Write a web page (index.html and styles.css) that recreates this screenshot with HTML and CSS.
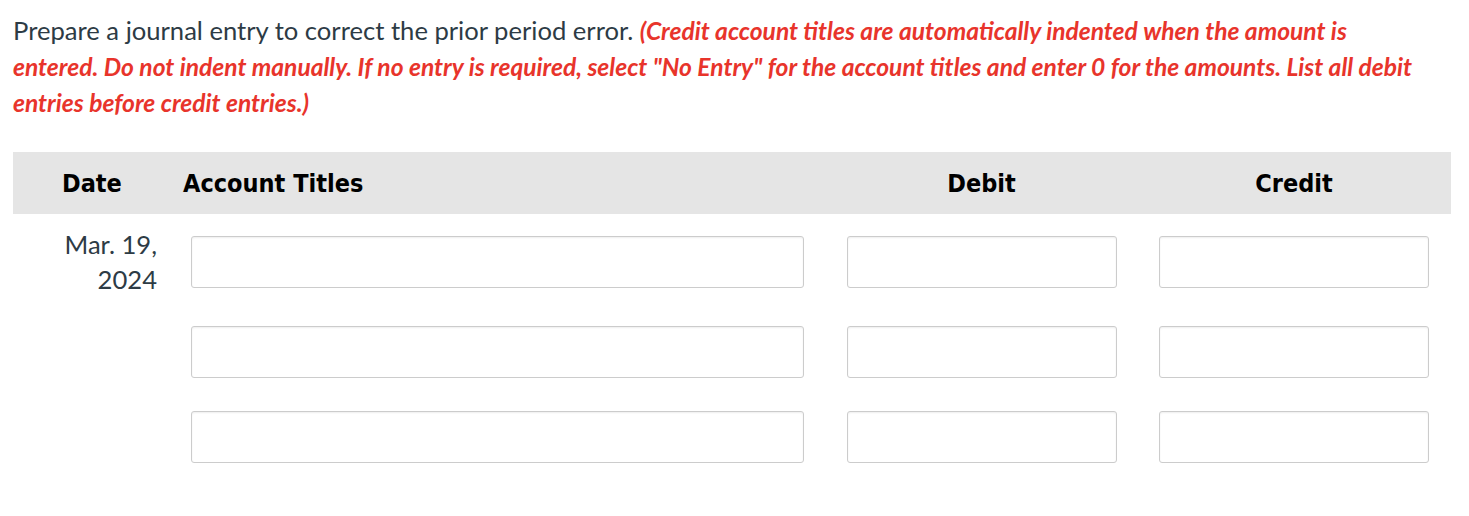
FILE: index.html
```html
<!DOCTYPE html>
<html lang="en">
<head>
<meta charset="utf-8">
<title>Journal entry</title>
<link rel="stylesheet" href="styles.css">
</head>
<body>
<div class="page">
  <p class="prompt">Prepare a journal entry to correct the prior period error. <em class="hint">(Credit account titles are automatically indented when the amount is entered. Do not indent manually. If no entry is required, select "No Entry" for the account titles and enter 0 for the amounts. List all debit entries before credit entries.)</em></p>

  <div class="head">
    <div class="h-date">Date</div>
    <div class="h-acct">Account Titles</div>
    <div class="h-num">Debit</div>
    <div class="h-num">Credit</div>
  </div>

  <div class="entries">
    <div class="date">Mar. 19,<br>2024</div>
    <input class="field" type="text" aria-label="Account title 1">
    <input class="field" type="text" aria-label="Debit 1">
    <input class="field" type="text" aria-label="Credit 1">

    <div class="date"></div>
    <input class="field" type="text" aria-label="Account title 2">
    <input class="field" type="text" aria-label="Debit 2">
    <input class="field" type="text" aria-label="Credit 2">

    <div class="date"></div>
    <input class="field" type="text" aria-label="Account title 3">
    <input class="field" type="text" aria-label="Debit 3">
    <input class="field" type="text" aria-label="Credit 3">
  </div>
</div>
</body>
</html>
```

FILE: styles.css
```css
html, body {
  margin: 0;
  padding: 0;
  background: #ffffff;
}

.page {
  width: 1438px;
  margin-left: 13px;
  font-family: Lato, "Open Sans", sans-serif;
}

.prompt {
  margin: 12px 18px 32px 0;
  font-size: 25.6px;
  line-height: 36px;
  color: #2d3b45;
}

.hint {
  color: #e8342b;
  font-weight: bold;
  font-style: italic;
  font-size: 24.6px;
  line-height: 30px;
  letter-spacing: 0;
}

.head,
.entries {
  display: grid;
  grid-template-columns: 135.5px 613px 270px 270px;
  column-gap: 42.5px;
}

.head {
  height: 62px;
  align-items: center;
  background: #e5e5e5;
  font-family: "DejaVu Sans", sans-serif;
  font-weight: bold;
  font-size: 25px;
  font-stretch: condensed;
  color: #000;
}

.h-date {
  padding-left: 49px;
}

.h-acct {
  margin-left: -8px;
}

.h-num {
  text-align: center;
}

.entries {
  padding-top: 13px;
  row-gap: 20px;
  align-items: start;
}

.date {
  font-size: 25.6px;
  line-height: 35px;
  color: #2d3b45;
  text-align: right;
  margin-right: -8.5px;
}

.field {
  box-sizing: border-box;
  display: block;
  width: 100%;
  height: 52px;
  margin: 9px 0 4px 0;
  border: 1px solid #cccccc;
  border-radius: 3px;
  background: #ffffff;
  box-shadow: inset 0 1px 2px rgba(0, 0, 0, 0.07);
  font-family: Lato, sans-serif;
  font-size: 20px;
  padding: 0 10px;
}
```
